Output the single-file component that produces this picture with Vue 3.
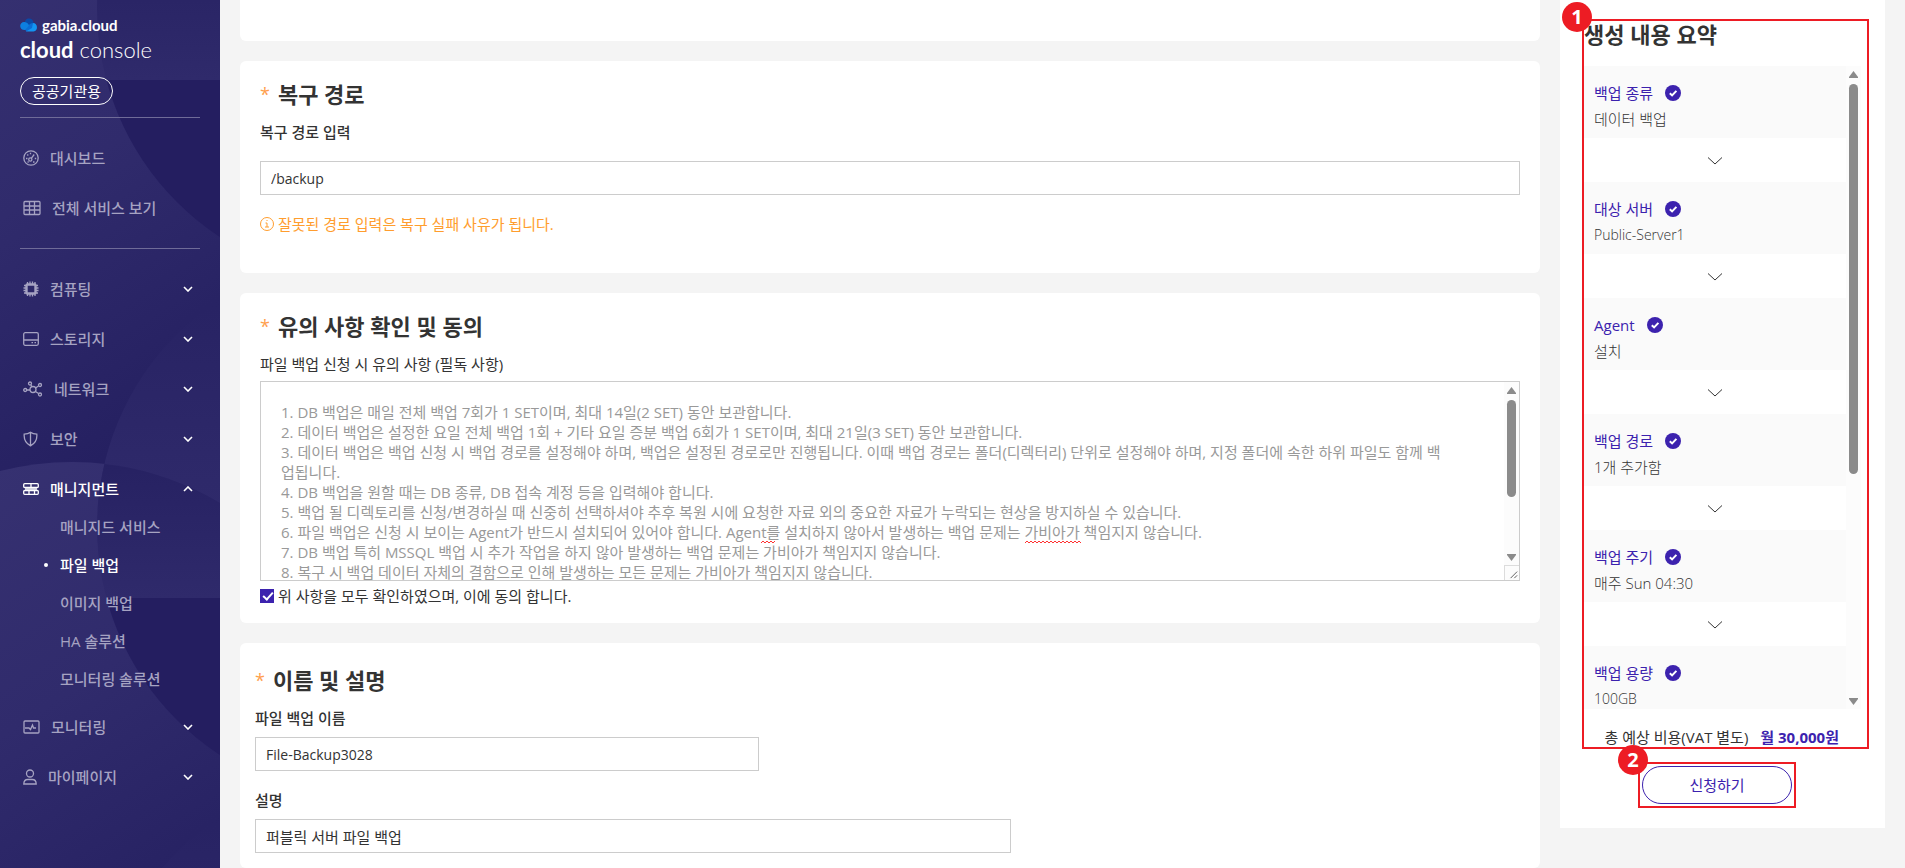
<script setup>
import { ref } from 'vue';

const topMenu = [
    { icon: 'dashboard', label: '대시보드' },
    { icon: 'grid', label: '전체 서비스 보기' }
];

const menu = [
    { icon: 'chip', label: '컴퓨팅' },
    { icon: 'disk', label: '스토리지' },
    { icon: 'network', label: '네트워크' },
    { icon: 'shield', label: '보안' },
    {
        icon: 'server',
        label: '매니지먼트',
        open: true,
        children: ['매니지드 서비스', '파일 백업', '이미지 백업', 'HA 솔루션', '모니터링 솔루션']
    },
    { icon: 'monitor', label: '모니터링' },
    { icon: 'user', label: '마이페이지' }
];

const activeChild = '파일 백업';

const iconWidths = {
    dashboard: 16, grid: 18, chip: 16, disk: 16, network: 20,
    shield: 16, server: 16, monitor: 17, user: 14
};

const summary = [
    { title: '백업 종류', value: '데이터 백업' },
    { title: '대상 서버', value: 'Public-Server1', latin: true },
    { title: 'Agent', value: '설치' },
    { title: '백업 경로', value: '1개 추가함' },
    { title: '백업 주기', value: '매주 Sun 04:30' },
    { title: '백업 용량', value: '100GB', latin: true }
];

const restorePath = ref('/backup');
const backupName = ref('File-Backup3028');
const description = ref('퍼블릭 서버 파일 백업');
const agreed = ref(true);

const terms = ref([
    '1. DB 백업은 매일 전체 백업 7회가 1 SET이며, 최대 14일(2 SET) 동안 보관합니다.',
    '2. 데이터 백업은 설정한 요일 전체 백업 1회 + 기타 요일 증분 백업 6회가 1 SET이며, 최대 21일(3 SET) 동안 보관합니다.',
    '3. 데이터 백업은 백업 신청 시 백업 경로를 설정해야 하며, 백업은 설정된 경로로만 진행됩니다. 이때 백업 경로는 폴더(디렉터리) 단위로 설정해야 하며, 지정 폴더에 속한 하위 파일도 함께 백',
    '업됩니다.',
    '4. DB 백업을 원할 때는 DB 종류, DB 접속 계정 등을 입력해야 합니다.',
    '5. 백업 될 디렉토리를 신청/변경하실 때 신중히 선택하셔야 추후 복원 시에 요청한 자료 외의 중요한 자료가 누락되는 현상을 방지하실 수 있습니다.',
    '6. 파일 백업은 신청 시 보이는 Agent가 반드시 설치되어 있어야 합니다. Agent를 설치하지 않아서 발생하는 백업 문제는 가비아가 책임지지 않습니다.',
    '7. DB 백업 특히 MSSQL 백업 시 추가 작업을 하지 않아 발생하는 백업 문제는 가비아가 책임지지 않습니다.',
    '8. 복구 시 백업 데이터 자체의 결함으로 인해 발생하는 모든 문제는 가비아가 책임지지 않습니다.'
].join('\n'));
</script>

<template>
    <div class="console">
        <aside class="sidebar">
            <svg class="sidebar-bg" width="220" height="1036" viewBox="0 0 220 1036" aria-hidden="true">
                <defs>
                    <linearGradient id="wave" x1="0" y1="0" x2="0.25" y2="1">
                        <stop offset="0" stop-color="#363171" />
                        <stop offset="0.45" stop-color="#302b6c" />
                        <stop offset="1" stop-color="#241f60" />
                    </linearGradient>
                    <linearGradient id="rise" x1="0" y1="0" x2="0" y2="1">
                        <stop offset="0" stop-color="#262162" />
                        <stop offset="1" stop-color="#2f2a6b" />
                    </linearGradient>
                    <clipPath id="ring"><circle cx="370" cy="527" r="273" /></clipPath>
                    <clipPath id="hill"><circle cx="72" cy="750" r="288" /></clipPath>
                    <g id="tile">
                        <path d="M0 471Q72 453 144 471Q184 482 220 503V1036H0Z" fill="url(#wave)" />
                        <g clip-path="url(#ring)">
                            <rect x="90" y="250" width="130" height="260" fill="url(#rise)" />
                            <g clip-path="url(#hill)">
                                <rect x="90" y="455" width="130" height="143" fill="url(#rise)" />
                            </g>
                            <rect x="90" y="598" width="130" height="210" fill="#241e60" />
                        </g>
                    </g>
                </defs>
                <rect width="220" height="1036" fill="#2a2566" />
                <use href="#tile" y="-518" />
                <use href="#tile" />
                <use href="#tile" y="518" />
            </svg>

            <header class="brand">
                <a class="logo" href="#">
                    <svg width="18" height="14" viewBox="0 0 18 14">
                        <path d="M5 5C4.500 2.500 6.500.5 9 .5c2.600 0 4.500 2 4.500 4.500L9 9Z" fill="#0a4aa8" />
                        <path d="M6 13.500 13 5a4.300 4.300 0 0 1 .5 8.500Z" fill="#1295f2" />
                        <path d="M6 13.500c-1.500-2 3-8.500 7-8.500l-1 5Z" fill="#0b6cd4" />
                        <path d="M.2 8c0-2.500 2-4.300 4.300-4C7 4.200 8.500 6 9 7.500L5.500 12C2.500 12.500.2 10.500.2 8Z" fill="#0d7fe0" />
                    </svg>
                    <span>gabia.cloud</span>
                </a>
                <p class="product"><b>cloud</b> console</p>
                <span class="badge">공공기관용</span>
            </header>

            <nav>
                <ul class="menu-group">
                    <li v-for="item in topMenu" :key="item.label">
                        <a class="menu-item" href="#">
                            <svg v-if="item.icon === 'dashboard'" class="icon" :width="iconWidths[item.icon]" height="16" viewBox="0 0 16 16">
                                <circle cx="8" cy="8" r="7.200" />
                                <circle cx="7.300" cy="9.500" r="1.600" />
                                <path d="M8.300 8.300 11.200 4.500M3 8.500h1.500M4.300 4.500l1 1M7.500 2.800v1.500M11.800 8.500h1.400M4.500 12h1.200M10 12h1.500" />
                            </svg>
                            <svg v-else class="icon" :width="iconWidths[item.icon]" height="16" viewBox="0 0 18 16">
                                <rect x="1" y="1.500" width="16" height="13" rx="1" />
                                <path d="M1 6h16M1 10h16M6.500 1.500v13M11.500 1.500v13" />
                            </svg>
                            <span>{{ item.label }}</span>
                        </a>
                    </li>
                </ul>
                <ul class="menu-group">
                    <li v-for="item in menu" :key="item.label">
                        <a class="menu-item" :class="{ open: item.open }" href="#">
                            <svg class="icon" :width="iconWidths[item.icon]" height="16" :viewBox="`0 0 ${iconWidths[item.icon]} 16`">
                                <template v-if="item.icon === 'chip'">
                                    <rect x="3.500" y="3.500" width="9" height="9" rx="1" stroke-width="2.400" />
                                    <path d="M4.500 1v2M7 .5V3M9.500.5V3M12 1v2M4.500 13v2M7 13v2.500M9.500 13v2.500M12 13v2M1 4.500h2M.5 7H3M.5 9.500H3M1 12h2M13 4.500h2M13 7h2.500M13 9.500h2.500M13 12h2" />
                                </template>
                                <template v-else-if="item.icon === 'disk'">
                                    <rect x=".7" y="1.700" width="14.600" height="12.600" rx="1.500" />
                                    <path d="M1 9h14M8.500 11.700H10M11.500 11.700H13" />
                                </template>
                                <template v-else-if="item.icon === 'network'">
                                    <circle cx="10" cy="8.500" r="3" />
                                    <circle cx="2.200" cy="9" r="1.500" />
                                    <circle cx="7" cy="2.500" r="1.500" />
                                    <circle cx="17" cy="4" r="1.500" />
                                    <circle cx="17" cy="13.500" r="1.500" />
                                    <path d="M4 9h3M8 4l1 2M12.500 7 15.500 5M12.500 10.500l3 2" />
                                </template>
                                <template v-else-if="item.icon === 'shield'">
                                    <path d="M7.500 1.200c2 1.500 4 1.900 6.300 2 .5 5-1.300 9-6.300 11.600C2.500 12.200.8 8.200 1.200 3.200c2.300-.1 4.300-.5 6.300-2ZM7.500 1.500v13" />
                                </template>
                                <template v-else-if="item.icon === 'server'">
                                    <rect x=".7" y="2.700" width="14.600" height="3.800" rx="1" />
                                    <rect x=".7" y="9.500" width="14.600" height="3.800" rx="1" />
                                    <path d="M8 2.700v3.800M6 9.500v3.800M11.500 9.500v3.800M2 8h12" />
                                </template>
                                <template v-else-if="item.icon === 'monitor'">
                                    <rect x="1" y="2" width="15" height="12" rx="1" />
                                    <path d="M2 9h4l1.500 1.500L9.500 6l1 3H13" />
                                </template>
                                <template v-else>
                                    <circle cx="7" cy="4.500" r="3.500" />
                                    <path d="M.8 15c0-3 2-4.500 4-4.500h4.400c2 0 4 1.500 4 4.500Z" />
                                </template>
                            </svg>
                            <span>{{ item.label }}</span>
                            <svg class="caret" width="10" height="6" viewBox="0 0 10 6">
                                <path :d="item.open ? 'M1 5l4-4 4 4' : 'M1 1l4 4 4-4'" />
                            </svg>
                        </a>
                        <ul v-if="item.open" class="submenu">
                            <li v-for="child in item.children" :key="child">
                                <a href="#" :class="{ active: child === activeChild }">{{ child }}</a>
                            </li>
                        </ul>
                    </li>
                </ul>
            </nav>
        </aside>

        <main class="content">
            <section class="card card-cut"></section>

            <section class="card">
                <h2><span class="required">*</span>복구 경로</h2>
                <label class="field-label" for="restore-path">복구 경로 입력</label>
                <input id="restore-path" v-model="restorePath" class="text-input path-input latin" type="text">
                <p class="notice">
                    <svg width="14" height="14" viewBox="0 0 14 14">
                        <circle cx="7" cy="7" r="6.500" />
                        <path d="M5.500 6H7v4M5 10h4M6.500 3.500h1" />
                    </svg>
                    잘못된 경로 입력은 복구 실패 사유가 됩니다.
                </p>
            </section>

            <section class="card">
                <h2><span class="required">*</span>유의 사항 확인 및 동의</h2>
                <label class="field-label regular" for="terms">파일 백업 신청 시 유의 사항 (필독 사항)</label>
                <div class="terms-box">
                    <textarea id="terms" v-model="terms" readonly spellcheck="false"></textarea>
                    <svg class="squiggle squiggle-short" height="4" aria-hidden="true">
                        <rect width="100%" height="4" fill="url(#zigzag)" />
                    </svg>
                    <svg class="squiggle squiggle-long" height="4" aria-hidden="true">
                        <defs>
                            <pattern id="zigzag" width="4" height="4" patternUnits="userSpaceOnUse">
                                <path d="M0 3l2-2 2 2" fill="none" stroke="#f33" stroke-width="1" />
                            </pattern>
                        </defs>
                        <rect width="100%" height="4" fill="url(#zigzag)" />
                    </svg>
                    <div class="scrollbar" aria-hidden="true">
                        <svg width="9" height="7" viewBox="0 0 9 7"><path d="M4.500 0 9 6v1H0V6Z" /></svg>
                        <i class="thumb"></i>
                        <svg class="down" width="9" height="7" viewBox="0 0 9 7"><path d="M0 0h9v1L4.500 7 0 1Z" /></svg>
                        <svg class="grip" width="15" height="15" viewBox="0 0 15 15">
                            <path d="M6 13l7-7M10 13l3-3" />
                        </svg>
                    </div>
                </div>
                <label class="agree">
                    <input v-model="agreed" type="checkbox">
                    <span>위 사항을 모두 확인하였으며, 이에 동의 합니다.</span>
                </label>
            </section>

            <section class="card card-name">
                <h2><span class="required">*</span>이름 및 설명</h2>
                <label class="field-label" for="backup-name">파일 백업 이름</label>
                <input id="backup-name" v-model="backupName" class="text-input name-input latin" type="text">
                <label class="field-label" for="backup-desc">설명</label>
                <input id="backup-desc" v-model="description" class="text-input desc-input" type="text">
            </section>
        </main>

        <aside class="summary">
            <div class="marked summary-body">
                <h2>생성 내용 요약</h2>
                <div class="steps">
                    <ol>
                        <li v-for="(step, i) in summary" :key="step.title">
                            <div class="step">
                                <p class="step-title">
                                    {{ step.title }}
                                    <svg width="16" height="16" viewBox="0 0 16 16">
                                        <circle cx="8" cy="8" r="8" fill="#3c22ae" />
                                        <path d="M4.800 8.200l2.300 2.200 4.300-4.500" fill="none" stroke="#fff" stroke-width="2" />
                                    </svg>
                                </p>
                                <p :class="{ latin: step.latin }">{{ step.value }}</p>
                            </div>
                            <div v-if="i < summary.length - 1" class="arrow">
                                <svg width="14" height="8" viewBox="0 0 14 8"><path d="M0 .5l7 6.500 7-6.500" /></svg>
                            </div>
                        </li>
                    </ol>
                    <div class="scrollbar" aria-hidden="true">
                        <svg width="9" height="7" viewBox="0 0 9 7"><path d="M4.500 0 9 6v1H0V6Z" /></svg>
                        <i class="thumb"></i>
                        <svg class="down" width="9" height="7" viewBox="0 0 9 7"><path d="M0 0h9v1L4.500 7 0 1Z" /></svg>
                    </div>
                </div>
                <p class="total">총 예상 비용(VAT 별도) <strong>월 30,000원</strong></p>
                <span class="marker">1</span>
            </div>
            <div class="marked submit">
                <button type="button">신청하기</button>
                <span class="marker">2</span>
            </div>
        </aside>
    </div>
</template>

<style>
body {
    margin: 0;
    background: #f4f4f4;
}
</style>

<style scoped>
.console {
    display: flex;
    align-items: stretch;
    min-height: 100vh;
    background: #f4f4f4;
    color: #333;
    font-family: "Open Sans", "Noto Sans CJK KR", sans-serif;
    font-size: 15px;
    line-height: 20px;
}
.console * {
    box-sizing: border-box;
}
h2, p, ul, ol {
    margin: 0;
    padding: 0;
    list-style: none;
}
a {
    color: inherit;
    text-decoration: none;
}
input, textarea, button {
    font: inherit;
    color: inherit;
}
svg {
    flex: none;
}

/* sidebar */
.sidebar {
    position: relative;
    flex: none;
    width: 220px;
    overflow: hidden;
    background: #2a2566;
    color: #fff;
}
.sidebar-bg {
    position: absolute;
    top: 0;
    left: 0;
}
.brand, nav {
    position: relative;
    margin: 0 20px;
}
.brand {
    padding: 15px 0 12px;
    border-bottom: 1px solid #6f6b98;
}
.logo {
    display: flex;
    align-items: center;
    gap: 4px;
    height: 20px;
    font: 700 15px/20px Lato, sans-serif;
}
.product {
    margin-bottom: 12px;
    font: 300 22px/30px Lato, sans-serif;
}
.product b {
    font-weight: 700;
}
.badge {
    display: inline-block;
    padding: 0 11px;
    border: 1px solid #fff;
    border-radius: 14px;
    line-height: 26px;
}
.menu-group {
    padding: 15px 0;
}
.menu-group + .menu-group {
    border-top: 1px solid #6f6b98;
}
.menu-item {
    display: flex;
    align-items: center;
    gap: 11px;
    height: 50px;
    padding: 0 7px 0 3px;
    color: #a6a3c2;
    font-weight: 500;
}
.menu-item.open {
    color: #fff;
}
.icon {
    fill: none;
    stroke: currentColor;
    stroke-width: 1.3;
}
.caret {
    margin-left: auto;
    fill: none;
    stroke: #fff;
    stroke-width: 1.6;
}
.submenu {
    margin-top: -6px;
    padding-bottom: 4px;
}
.submenu a {
    display: flex;
    align-items: center;
    height: 38px;
    padding-left: 40px;
    color: #a6a3c2;
    font-weight: 500;
}
.submenu a.active {
    padding-left: 24px;
    color: #fff;
}
.submenu a.active::before {
    content: "";
    width: 4px;
    height: 4px;
    margin-right: 12px;
    border-radius: 50%;
    background: #fff;
}

/* form cards */
.content {
    flex: 1;
    display: flex;
    flex-direction: column;
    gap: 20px;
    min-width: 0;
    margin: 0 20px;
}
.card {
    padding: 18px 20px 0;
    border-radius: 6px;
    background: #fff;
}
.card-cut {
    height: 41px;
    border-radius: 0 0 6px 6px;
}
h2 {
    font-size: 22px;
    font-weight: 700;
    line-height: 30px;
}
.card h2 {
    display: flex;
    gap: 8px;
}
.required {
    color: #ffa04d;
    font-size: 18px;
    font-weight: 400;
}
.field-label {
    display: block;
    width: max-content;
    margin-top: 13px;
    font-weight: 500;
}
.field-label.regular {
    font-weight: 400;
}
.text-input {
    display: block;
    height: 34px;
    padding: 0 10px;
    border: 1px solid #ccc;
    background: #fff;
    outline: none;
}
.latin {
    font-size: 14px;
}
.path-input {
    width: 100%;
    margin-top: 19px;
}
.notice {
    display: flex;
    align-items: center;
    gap: 4px;
    padding: 19px 0 39px;
    color: #ff9d2e;
}
.notice svg {
    fill: none;
    stroke: #ff9d2e;
}
.terms-box {
    position: relative;
    display: flex;
    height: 200px;
    margin-top: 7px;
    border: 1px solid #ccc;
}
.terms-box textarea {
    flex: 1;
    min-width: 0;
    padding: 20px;
    border: 0;
    outline: none;
    resize: none;
    overflow: hidden;
    background: #fff;
    color: #999;
}
.squiggle {
    position: absolute;
    top: 158px;
}
.squiggle-short {
    left: 500px;
    width: 14px;
}
.squiggle-long {
    left: 764px;
    width: 56px;
}
.scrollbar {
    display: flex;
    flex-direction: column;
    align-items: center;
    flex: none;
    width: 15px;
    padding-top: 5px;
    background: #fcfcfc;
}
.scrollbar svg {
    fill: #8b8b8b;
}
.thumb {
    width: 9px;
    height: 97px;
    margin-top: 6px;
    border-radius: 5px;
    background: #8b8b8b;
}
.scrollbar .down {
    margin-top: auto;
}
.scrollbar .grip {
    margin-top: 4px;
    border-top: 1px solid #dcdcdc;
    border-left: 1px solid #dcdcdc;
    fill: none;
    stroke: #555;
}
.agree {
    display: flex;
    align-items: center;
    gap: 4px;
    width: max-content;
    padding: 5px 0 17px;
}
.agree input {
    appearance: none;
    width: 14px;
    height: 14px;
    margin: 0;
    background: #fff;
    border: 1px solid #3c22ae;
}
.agree input:checked {
    background: #3c22ae;
}
.agree input:checked::before {
    content: "";
    display: block;
    width: 4px;
    height: 8px;
    margin: 0 4px;
    border: solid #fff;
    border-width: 0 2px 2px 0;
    transform: rotate(42deg);
}
.card-name {
    padding: 22px 25px 15px 15px;
}
.card-name .text-input {
    margin-top: 9px;
}
.card-name .text-input + .field-label {
    margin-top: 19px;
}
.card-name .name-input {
    width: 40%;
}
.card-name .desc-input {
    width: 60%;
}

/* order summary */
.summary {
    flex: none;
    align-self: flex-start;
    width: 325px;
    margin-right: 20px;
    padding: 19px 16px 20px 22px;
    background: #fff;
}
.marked {
    position: relative;
    border: 2px solid #ed1c24;
}
.marker {
    position: absolute;
    top: -19px;
    left: -22px;
    width: 30px;
    height: 30px;
    border-radius: 50%;
    background: #ed1c24;
    color: #fff;
    font-size: 20px;
    font-weight: 700;
    line-height: 30px;
    text-align: center;
}
.summary-body {
    padding-right: 6px;
}
.summary h2 {
    line-height: 26px;
}
.steps {
    display: flex;
    height: 643px;
    margin-top: 19px;
    font-weight: 300;
}
.steps ol {
    flex: 1;
    overflow: hidden;
}
.step {
    height: 72px;
    padding: 17px 10px 0;
    background: #fafafa;
}
.step-title {
    display: flex;
    align-items: center;
    gap: 12px;
    margin-bottom: 6px;
    color: #3c22ae;
    font-weight: 400;
}
.arrow {
    display: flex;
    align-items: center;
    justify-content: center;
    height: 44px;
    padding-top: 2px;
}
.arrow svg {
    fill: none;
    stroke: #333;
}
.steps .thumb {
    height: 390px;
}
.steps .down {
    margin-bottom: 4px;
}
.total {
    display: flex;
    align-items: center;
    justify-content: flex-end;
    gap: 12px;
    padding: 18px 22px 0 0;
}
.total strong {
    color: #3c22ae;
}
.submit {
    display: flex;
    width: max-content;
    margin: 13px 0 0 56px;
    padding: 2px;
}
.submit button {
    width: 150px;
    height: 38px;
    border: 1px solid #3c22ae;
    border-radius: 19px;
    background: #fff;
    color: #3c22ae;
}
</style>
